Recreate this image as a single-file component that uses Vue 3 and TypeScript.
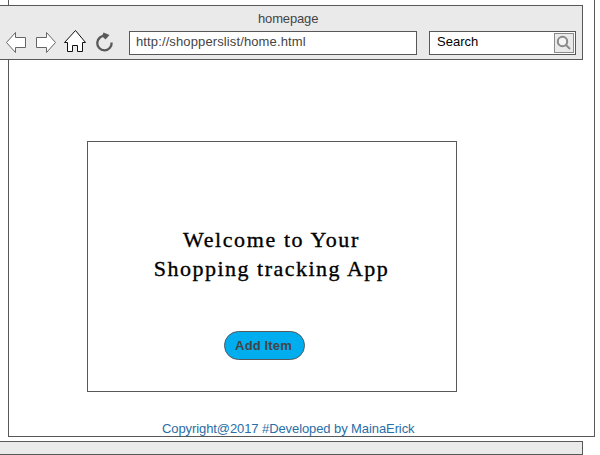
<script setup lang="ts">
import { ref } from 'vue'

const title = 'homepage'
const url = 'http://shopperslist/home.html'
const searchLabel = ref<string>('Search')
const welcome: string[] = ['Welcome to Your', 'Shopping tracking App']
</script>

<template>
  <div class="screen">
    <div class="frame">
      <header class="browser">
        <div class="title">{{ title }}</div>
        <div class="toolbar">
          <svg class="nav" width="129" height="30" viewBox="0 0 129 30">
            <g fill="#fff" stroke="#666" stroke-width="1">
              <path d="M6.5 14.5 L15.5 4.5 V9.5 H25.5 V19.5 H15.5 V24.5 Z" />
              <path d="M55.5 14.5 L46.5 4.5 V9.5 H36.5 V19.5 H46.5 V24.5 Z" />
            </g>
            <path
              d="M75.5 2.5 L85.5 14.5 H82.5 V23.5 H77.5 V17.5 H72.5 V23.5 H67.5 V14.5 H64.5 Z"
              fill="#fff"
              stroke="#111"
            />
            <path d="M105.5 8 A7.2 7.2 0 1 0 111.6 14.5" fill="none" stroke="#595959" stroke-width="2.3" />
            <path d="M103.5 4.5 L109.5 7 L105.5 11.5 L102 8 Z" fill="#595959" />
          </svg>
          <div class="url">{{ url }}</div>
          <div class="search">
            <span>{{ searchLabel }}</span>
            <div class="lens">
              <svg width="18" height="18" viewBox="0 0 18 18">
                <circle cx="7.5" cy="7.5" r="4.7" fill="#f4f4f4" stroke="#8a8a8a" stroke-width="2" />
                <path d="M11 11 L15 15" stroke="#8a8a8a" stroke-width="2" />
              </svg>
            </div>
          </div>
        </div>
      </header>
      <main class="card">
        <h1><span v-for="(line, i) in welcome" :key="line" :class="['line', 'line' + i]">{{ line }}</span></h1>
        <button class="add">Add Item</button>
      </main>
      <footer class="copyright">Copyright@2017 #Developed by MainaErick</footer>
    </div>
    <div class="status"></div>
  </div>
</template>

<style>
body {
  background: #fff;
}
</style>

<style scoped>
.screen {
  width: 600px;
  height: 455px;
  overflow: hidden;
  font-family: 'Liberation Sans', Arial, sans-serif;
  font-size: 13px;
  color: #444;
}
.screen * {
  box-sizing: border-box;
}
.frame {
  display: flex;
  flex-direction: column;
  width: 587px;
  height: 437px;
  margin-left: 8px;
  padding-top: 5px;
  border: 1px solid #58585a;
  border-top: 0;
}
.browser {
  flex: none;
  width: 593px;
  height: 55px;
  margin-left: -19px;
  padding-left: 9px;
  background: #eaeaea;
  border: 1px solid #58585a;
}
.title {
  height: 25px;
  padding-left: 258px;
  line-height: 25px;
  letter-spacing: -0.15px;
}
.toolbar {
  display: flex;
}
.nav {
  flex: none;
  margin-top: -3px;
}
.url,
.search {
  height: 24px;
  background: #fff;
  border: 1px solid #58585a;
  line-height: 19px;
}
.url {
  width: 288px;
  padding-left: 6px;
  letter-spacing: 0.12px;
}
.search {
  display: flex;
  justify-content: space-between;
  width: 147px;
  margin-left: 12px;
  padding: 0 1px 0 7px;
  color: #000;
}
.lens {
  width: 20px;
  height: 20px;
  margin-top: 1px;
  background: #eaeaea;
  border: 1px solid #8a8a8a;
}
.lens svg {
  display: block;
}
.card {
  display: flex;
  flex: none;
  flex-direction: column;
  align-items: center;
  width: 370px;
  height: 251px;
  margin: 81px 0 0 78px;
  padding: 83px 15px 0 0;
  border: 1px solid #58585a;
}
h1 {
  margin: 0;
  padding-left: 14px;
  color: #000;
  font: 400 22px/29px 'Liberation Serif', serif;
  text-align: center;
  -webkit-text-stroke: 0.35px #000;
}
.line {
  display: block;
  white-space: nowrap;
}
.line0 {
  letter-spacing: 1.6px;
}
.line1 {
  letter-spacing: 1.5px;
}
.add {
  width: 81px;
  height: 29px;
  margin-top: 48px;
  padding: 0 2px 0 0;
  background: #00aeef;
  border: 1px solid #58585a;
  border-radius: 15px;
  color: #444;
  font: bold 13px/27px 'Liberation Sans', Arial, sans-serif;
  letter-spacing: 0.15px;
}
.copyright {
  margin: 29px 0 0 153px;
  color: #2a6ea6;
  line-height: 15px;
  letter-spacing: -0.09px;
}
.status {
  width: 584px;
  height: 14px;
  margin: 4px 0 0 -1px;
  background: #eaeaea;
  border: 1px solid #58585a;
}
</style>
